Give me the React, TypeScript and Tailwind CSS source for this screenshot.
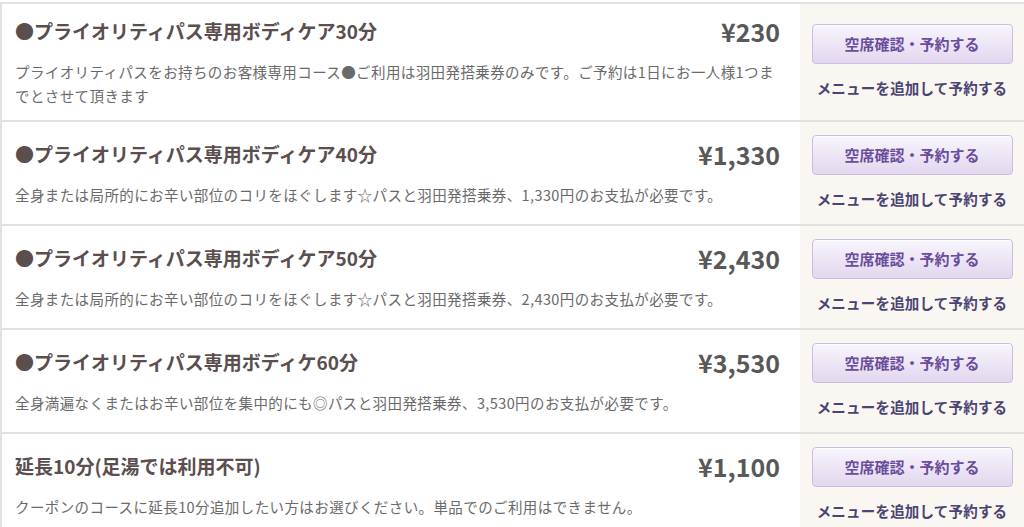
const font = { fontFamily: '"Noto Sans CJK JP", "Noto Sans", sans-serif' }

const menus = [
  {
    title: "●プライオリティパス専用ボディケア30分",
    price: "¥230",
    desc: "プライオリティパスをお持ちのお客様専用コース●ご利用は羽田発搭乗券のみです。ご予約は1日にお一人様1つまでとさせて頂きます",
  },
  {
    title: "●プライオリティパス専用ボディケア40分",
    price: "¥1,330",
    desc: "全身または局所的にお辛い部位のコリをほぐします☆パスと羽田発搭乗券、1,330円のお支払が必要です。",
  },
  {
    title: "●プライオリティパス専用ボディケア50分",
    price: "¥2,430",
    desc: "全身または局所的にお辛い部位のコリをほぐします☆パスと羽田発搭乗券、2,430円のお支払が必要です。",
  },
  {
    title: "●プライオリティパス専用ボディケ60分",
    price: "¥3,530",
    desc: "全身満遍なくまたはお辛い部位を集中的にも◎パスと羽田発搭乗券、3,530円のお支払が必要です。",
  },
  {
    title: "延長10分(足湯では利用不可)",
    price: "¥1,100",
    desc: "クーポンのコースに延長10分追加したい方はお選びください。単品でのご利用はできません。",
  },
]

export default function App() {
  return (
    <div className="w-[1024px] h-[527px] overflow-hidden bg-white pt-[2px]" style={font}>
      <div className="border-t-2 border-l-2 border-[#e1e1e1]">
        {menus.map((m, i) => (
          <div key={i} className="flex border-b-2 border-[#e1e1e1]">
            <div className="flex-1 flex flex-col justify-center pl-[13px] pr-[20px] py-[12px]">
              <div className="flex items-center justify-between h-[30px]">
                <h3 className="text-[19px] font-bold text-[#5a4e4e] leading-[28px]">{m.title}</h3>
                <span className="text-[25px] font-bold text-[#585858] leading-[30px]">{m.price}</span>
              </div>
              <p className="mt-[14px] text-[14.5px] leading-[24px] tracking-[0.4px] text-[#6a6a6a]">{m.desc}</p>
            </div>
            <div className="w-[224px] bg-[#faf6f1] flex flex-col items-center justify-center py-[13px]">
              <button className="w-[201px] h-[40px] rounded-[4px] border border-[#cbbde2] bg-gradient-to-b from-[#f8f5fc] to-[#e2d7ef] text-[15px] font-bold text-[#6a4c9c] shadow-[inset_0_1px_0_rgba(255,255,255,0.8)]">
                空席確認・予約する
              </button>
              <a href="#" className="mt-[12px] text-[14.5px] leading-[24px] font-bold tracking-[0.2px] text-[#4a4473]">
                メニューを追加して予約する
              </a>
            </div>
          </div>
        ))}
      </div>
    </div>
  )
}
